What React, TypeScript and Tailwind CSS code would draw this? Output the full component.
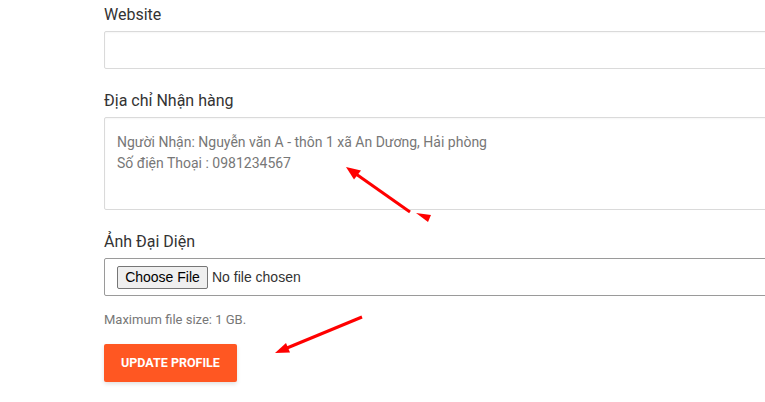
import React from "react";

export default function App() {
  return (
    <div className="relative w-[765px] h-[402px] overflow-hidden bg-white font-['Roboto',sans-serif]">
      <div className="pl-[104px] pt-[3px] w-[900px] flex flex-col">
        <label className="text-[16px] leading-[24px] text-[#333]">Website</label>
        <div className="mt-[4px] h-[38px] w-[700px] border border-[#dadada] bg-white rounded-[2px] shadow-[inset_0_1px_2px_rgba(0,0,0,0.04)]" />

        <label className="mt-[20px] text-[16px] leading-[24px] text-[#333]">Địa chỉ Nhận hàng</label>
        <div className="mt-[4px] h-[93px] w-[700px] border border-[#dadada] bg-white rounded-[2px] pt-[14px] px-[12px] text-[14px] leading-[21px] text-[#777] shadow-[inset_0_1px_2px_rgba(0,0,0,0.04)]">
          <div>Người Nhận: Nguyễn văn A - thôn 1 xã An Dương, Hải phòng</div>
          <div>Số điện Thoại : 0981234567</div>
        </div>

        <label className="mt-[20px] text-[16px] leading-[24px] text-[#333]">Ảnh Đại Diện</label>
        <div className="mt-[4px] h-[38px] w-[700px] border border-[#9a9a9a] bg-white rounded-[2px] flex items-center pl-[12px] font-['Liberation_Sans',Arial,sans-serif] text-[14px]">
          <span className="h-[23px] w-[91px] flex items-center justify-center border border-[#767676] bg-[#efefef] rounded-[2px] text-black">
            Choose File
          </span>
          <span className="ml-[4px] text-[#333]">No file chosen</span>
        </div>

        <div className="mt-[15px] text-[13px] leading-[18px] text-[#777]">Maximum file size: 1 GB.</div>

        <div className="mt-[15px] h-[38px] w-[133px] bg-[#ff5722] rounded-[2px] flex items-center justify-center text-white text-[12.5px] font-bold shadow-[0_2px_4px_rgba(0,0,0,0.12)]">
          UPDATE PROFILE
        </div>
      </div>

      <svg className="absolute left-0 top-0 pointer-events-none" width="765" height="402" viewBox="0 0 765 402">
        <line x1="410" y1="212" x2="356" y2="174" stroke="#ff0000" strokeWidth="3" />
        <polygon points="346,167 361,170.5 354,179.5" fill="#ff0000" />
        <polygon points="416,213 431,215 428,222" fill="#ff0000" />
        <line x1="362" y1="317" x2="287" y2="348" stroke="#ff0000" strokeWidth="3" />
        <polygon points="275,353 290,352.5 286,343" fill="#ff0000" />
      </svg>
    </div>
  );
}
